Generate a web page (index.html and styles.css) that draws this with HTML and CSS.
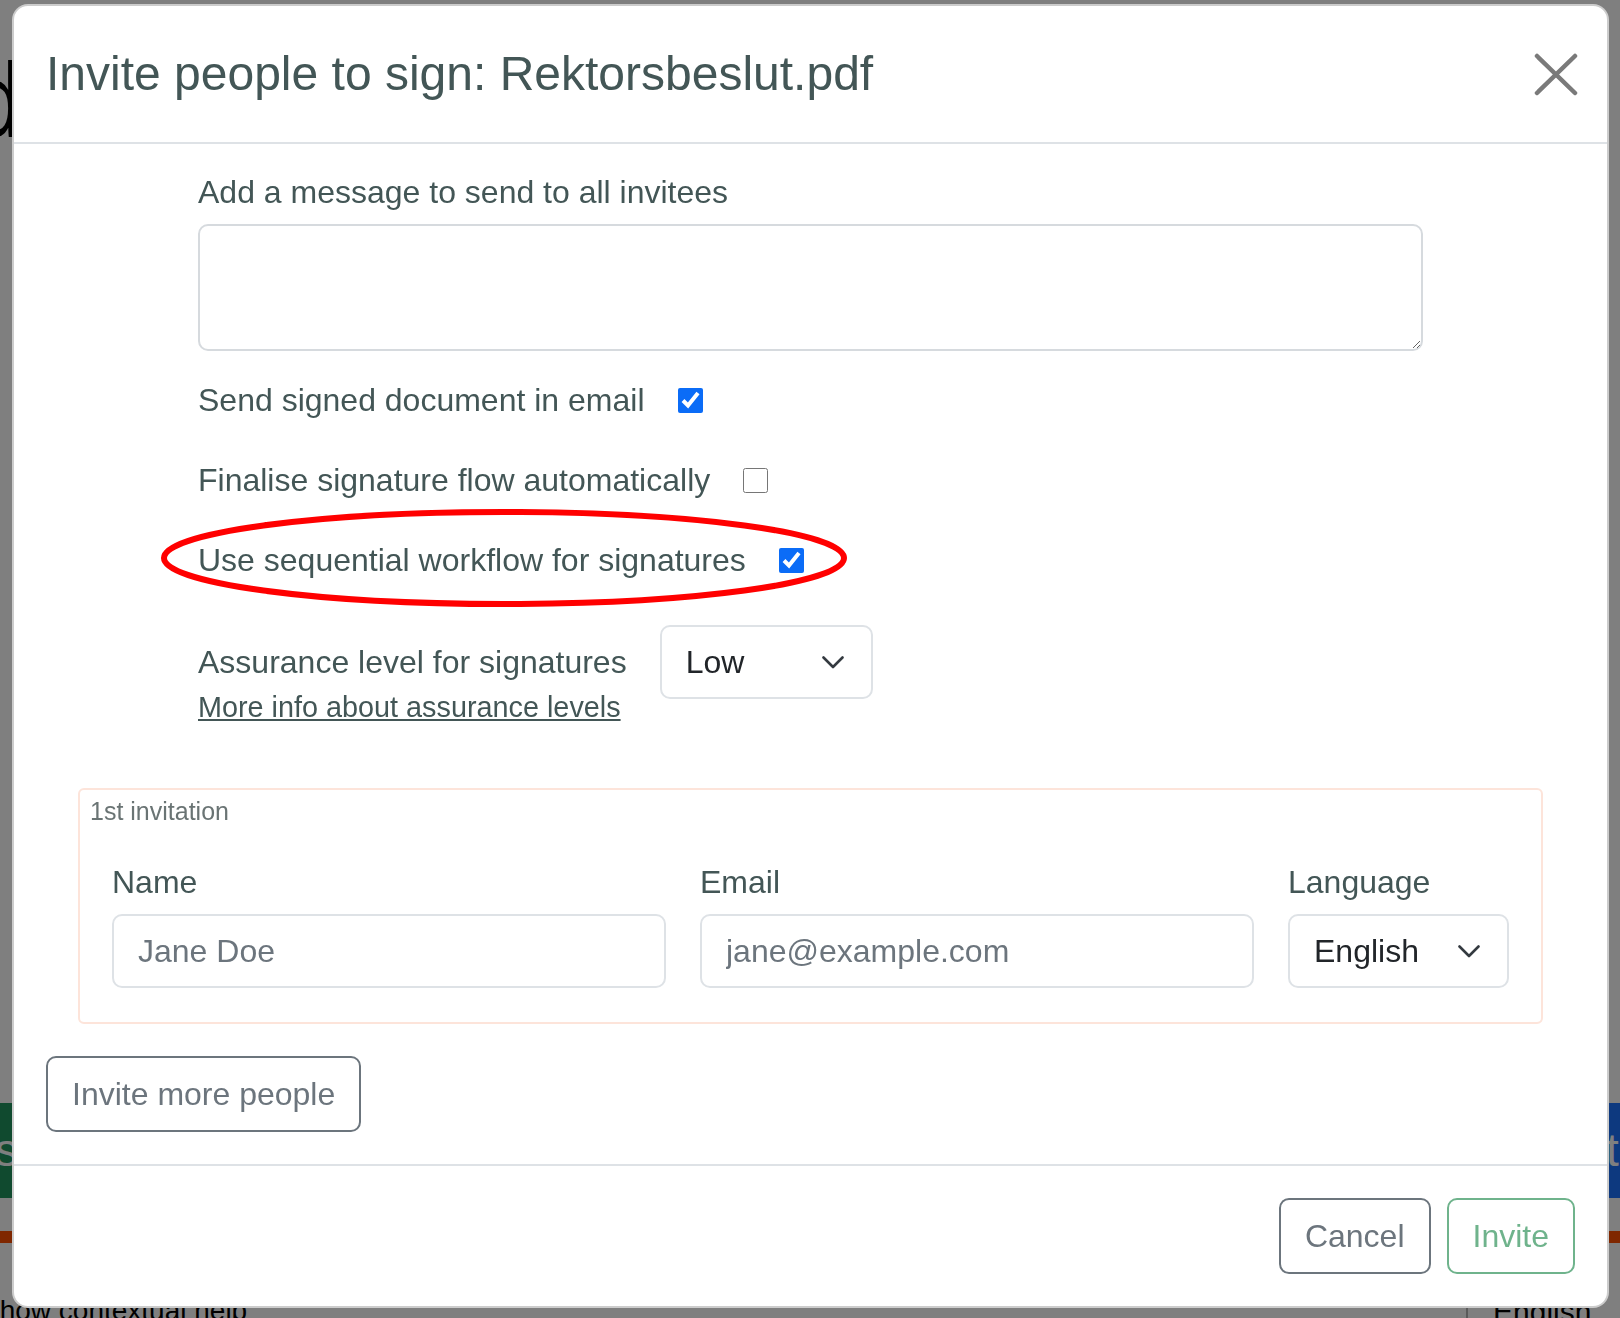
FILE: index.html
```html
<!DOCTYPE html>
<html>
<head>
    <title>Invite people to sign</title>
    <link rel="stylesheet" href="styles.css">
</head>
<body>
    <div class="page">
        <div class="page-heading">d</div>
        <div class="page-btn page-btn-green">s</div>
        <div class="page-btn page-btn-blue">t</div>
        <div class="page-rule"></div>
        <div class="page-help">Show contextual help</div>
        <div class="page-lang">English</div>
    </div>
    <div class="backdrop"></div>

    <div class="modal">
        <div class="modal-header">
            <h4 class="modal-title">Invite people to sign: Rektorsbeslut.pdf</h4>
            <button type="button" class="close" aria-label="Close">
                <svg width="44" height="43" viewBox="0 0 44 43">
                    <path d="M3 3L41 40M41 3L3 40" stroke="#7a7a7a" stroke-width="4.5" stroke-linecap="round" fill="none"/>
                </svg>
            </button>
        </div>

        <form class="modal-body">
            <div class="settings">
                <label class="form-label" for="message">Add a message to send to all invitees</label>
                <textarea id="message" class="message"></textarea>

                <div class="check-row">
                    <label for="sendSigned">Send signed document in email</label>
                    <input type="checkbox" id="sendSigned" checked>
                </div>
                <div class="check-row">
                    <label for="finalise">Finalise signature flow automatically</label>
                    <input type="checkbox" id="finalise">
                </div>
                <div class="check-row">
                    <label for="sequential">Use sequential workflow for signatures</label>
                    <input type="checkbox" id="sequential" checked>
                    <svg class="highlight" width="690" height="101" viewBox="0 0 690 101">
                        <ellipse cx="345" cy="50" rx="340" ry="46" stroke="#ff0000" stroke-width="6" fill="none"/>
                    </svg>
                </div>

                <div class="assurance-row">
                    <div class="assurance-label">
                        <label for="loa">Assurance level for signatures</label>
                        <a href="#">More info about assurance levels</a>
                    </div>
                    <div class="select-wrap select-loa">
                        <select id="loa">
                            <option>Low</option>
                        </select>
                        <svg class="chevron" width="22" height="13" viewBox="0 0 22 13">
                            <path d="M1.5 1.5L11 11l9.5-9.5" stroke="#343a40" stroke-width="2.6" fill="none" stroke-linecap="round" stroke-linejoin="round"/>
                        </svg>
                    </div>
                </div>
            </div>

            <fieldset class="invitation">
                <div class="invitation-title">1st invitation</div>
                <div class="invitee">
                    <div class="field field-wide">
                        <label class="form-label" for="name0">Name</label>
                        <input type="text" id="name0" class="form-control" placeholder="Jane Doe">
                    </div>
                    <div class="field field-wide">
                        <label class="form-label" for="email0">Email</label>
                        <input type="email" id="email0" class="form-control" placeholder="jane@example.com">
                    </div>
                    <div class="field field-lang">
                        <label class="form-label" for="lang0">Language</label>
                        <div class="select-wrap">
                            <select id="lang0">
                                <option>English</option>
                                <option>Svenska</option>
                            </select>
                            <svg class="chevron" width="22" height="13" viewBox="0 0 22 13">
                                <path d="M1.5 1.5L11 11l9.5-9.5" stroke="#343a40" stroke-width="2.6" fill="none" stroke-linecap="round" stroke-linejoin="round"/>
                            </svg>
                        </div>
                    </div>
                </div>
            </fieldset>

            <button type="button" class="btn btn-secondary more">Invite more people</button>
        </form>

        <div class="modal-footer">
            <button type="button" class="btn btn-secondary">Cancel</button>
            <button type="submit" class="btn btn-success" disabled>Invite</button>
        </div>
    </div>
</body>
</html>
```

FILE: styles.css
```css
body {
    margin: 0;
    font-family: "Liberation Sans", Arial, sans-serif;
    color: #212529;
    background-color: #fff;
    height: 1318px;
    overflow: hidden;
}

/* page behind the dialog */
.page {
    position: relative;
    height: 1318px;
    overflow: hidden;
}

.page-heading {
    position: absolute;
    left: -34px;
    top: 48px;
    font-size: 105px;
    line-height: 1;
    color: #000;
}

.page-btn {
    position: absolute;
    top: 1103px;
    height: 95px;
    width: 240px;
    color: #fff;
    font-size: 46px;
    line-height: 95px;
}

.page-btn-green {
    left: -222px;
    background-color: #21945f;
    text-align: right;
}

.page-btn-blue {
    left: 1600px;
    padding-left: 6px;
    background-color: #1a73ff;
}

.page-rule {
    position: absolute;
    left: 0;
    right: 0;
    top: 1231px;
    height: 12px;
    background-color: #ff4f00;
}

.page-help {
    position: absolute;
    left: -19px;
    top: 1290px;
    font-size: 28px;
    line-height: 42px;
    color: #000;
}

.page-lang {
    position: absolute;
    left: 1466px;
    top: 1290px;
    width: 200px;
    height: 60px;
    padding-left: 25px;
    border-left: 2px solid #b4b4b4;
    font-size: 30px;
    line-height: 44px;
    color: #000;
}

.backdrop {
    position: fixed;
    top: 0;
    left: 0;
    right: 0;
    bottom: 0;
    background-color: rgba(0, 0, 0, 0.5);
}

/* dialog */
.modal {
    position: absolute;
    top: 4px;
    left: 12px;
    width: 1597px;
    box-sizing: border-box;
    background-color: #fff;
    border: 2px solid rgba(0, 0, 0, 0.2);
    border-radius: 16px;
    color: #435656;
}

.modal-header {
    display: flex;
    align-items: center;
    justify-content: space-between;
    padding: 32px;
    border-bottom: 2px solid #dee2e6;
}

.modal-title {
    margin: 0;
    font-size: 48px;
    line-height: 72px;
    font-weight: normal;
}

.close {
    display: flex;
    padding: 0;
    margin-right: -3px;
    border: none;
    background: none;
    cursor: pointer;
}

.modal-body {
    display: block;
    padding: 24px 32px 32px;
}

.settings {
    width: 1225px;
    margin: 0 auto 60px;
}

.form-label {
    display: block;
    font-size: 32px;
    line-height: 48px;
    margin-bottom: 8px;
}

.message {
    display: block;
    width: 100%;
    height: 127px;
    box-sizing: border-box;
    margin: 0 0 25px;
    padding: 12px 24px;
    border: 2px solid #d6dade;
    border-radius: 10px;
    font: inherit;
    font-size: 32px;
    resize: vertical;
}

.check-row {
    position: relative;
    display: flex;
    align-items: center;
    height: 48px;
    margin-bottom: 32px;
    font-size: 32px;
}

.check-row input {
    width: 25px;
    height: 25px;
    margin: 0 0 0 33px;
    accent-color: #0b6cf7;
}

.highlight {
    position: absolute;
    left: -39px;
    top: -28px;
    pointer-events: none;
}

.assurance-row {
    display: flex;
    align-items: flex-start;
    gap: 33px;
    margin-top: 41px;
}

.assurance-label {
    padding-top: 13px;
    font-size: 32px;
    line-height: 48px;
}

.assurance-label label {
    display: block;
}

.assurance-label a {
    display: block;
    font-size: 28.8px;
    line-height: 42px;
    color: #435656;
}

.select-wrap {
    position: relative;
}

.select-loa {
    width: 213px;
}

.select-wrap select {
    appearance: none;
    display: block;
    width: 100%;
    height: 74px;
    padding: 0 24px;
    border: 2px solid #dee2e6;
    border-radius: 10px;
    background-color: #fff;
    font-family: inherit;
    font-size: 32px;
    color: #212529;
}

.chevron {
    position: absolute;
    right: 29px;
    top: 31px;
    pointer-events: none;
}

/* invitee box */
.invitation {
    min-width: 0;
    margin: 0 32px;
    padding: 0 32px 34px;
    border: 2px solid #fde4da;
    border-radius: 6px;
}

.invitation-title {
    margin: 2px 0 0 -22px;
    font-size: 25px;
    line-height: 38px;
    color: #6a7474;
}

.invitee {
    display: flex;
    gap: 34px;
    margin-top: 28px;
}

.field-wide {
    flex: 1;
}

.field-lang {
    width: 221px;
}

.form-control {
    display: block;
    width: 100%;
    height: 74px;
    box-sizing: border-box;
    padding: 0 24px;
    border: 2px solid #dee2e6;
    border-radius: 10px;
    font-family: inherit;
    font-size: 32px;
    color: #212529;
}

.form-control::placeholder {
    color: #6c757d;
}

.btn {
    font-family: inherit;
    font-size: 32px;
    line-height: 48px;
    padding: 12px 24px;
    border: 2px solid;
    border-radius: 10px;
    background-color: #fff;
    cursor: pointer;
}

.btn-secondary {
    color: #6c757d;
    border-color: #6c757d;
}

.btn-success {
    color: #6fb38c;
    border-color: #6fb38c;
}

.more {
    margin-top: 32px;
}

.modal-footer {
    display: flex;
    justify-content: flex-end;
    gap: 16px;
    padding: 32px;
    border-top: 2px solid #dee2e6;
}
```
